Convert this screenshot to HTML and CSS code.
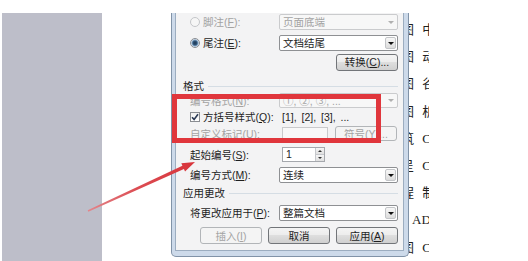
FILE: index.html
```html
<!DOCTYPE html>
<html lang="zh-CN">
<head>
    <meta charset="UTF-8">
    <title>脚注和尾注</title>
    <link rel="stylesheet" href="styles.css">
</head>
<body>
    <div class="page">
        <div class="sidebar"></div>

        <div class="dialog">
            <div class="client">
                <div class="row row-foot">
                    <div class="label off"><span class="radio"></span><span>脚注(<u>F</u>):</span></div>
                    <div class="select off"><span>页面底端</span><i class="drop"></i></div>
                </div>
                <div class="row row-end">
                    <div class="label"><span class="radio on"></span><span>尾注(<u>E</u>):</span></div>
                    <div class="select"><span>文档结尾</span><i class="drop"></i></div>
                </div>
                <div class="row row-convert">
                    <button class="btn">转换(<u>C</u>)...</button>
                </div>

                <div class="group group-format">格式</div>
                <div class="row row-numfmt">
                    <div class="label off"><span>编号格式(<u>N</u>):</span></div>
                    <div class="select off"><span>①, ②, ③, ...</span><i class="drop"></i></div>
                </div>
                <div class="row row-bracket">
                    <div class="label"><span class="check"><svg width="8" height="8" viewBox="0 0 8 8"><path d="M1 4.2 L3.1 6.4 L7 1.3" fill="none" stroke="#2b3a55" stroke-width="1.6"/></svg></span><span>方括号样式(<u>Q</u>):</span></div>
                    <div class="value">[1], [2], [3], ...</div>
                </div>
                <div class="row row-custom">
                    <div class="label off"><span>自定义标记(<u>U</u>):</span></div>
                    <div class="field off"></div>
                    <button class="btn off">符号(<u>Y</u>)...</button>
                </div>
                <div class="row row-start">
                    <div class="label"><span>起始编号(<u>S</u>):</span></div>
                    <div class="spin"><span>1</span><i class="spin-btns"><b class="up"></b><b class="down"></b></i></div>
                </div>
                <div class="row row-mode">
                    <div class="label"><span>编号方式(<u>M</u>):</span></div>
                    <div class="select"><span>连续</span><i class="drop"></i></div>
                </div>

                <div class="group group-apply">应用更改</div>
                <div class="row row-applyto">
                    <div class="label"><span>将更改应用于(<u>P</u>):</span></div>
                    <div class="select"><span>整篇文档</span><i class="drop"></i></div>
                </div>
                <div class="row row-buttons">
                    <button class="btn off">插入(<u>I</u>)</button>
                    <button class="btn">取消</button>
                    <button class="btn">应用(<u>A</u>)</button>
                </div>
            </div>
        </div>

        <div class="doc-text">
            <p>图 中</p>
            <p>图 动</p>
            <p>图 谷</p>
            <p>图 析</p>
            <p>筑 C</p>
            <p>呈 C</p>
            <p>程 制</p>
            <p class="latin">AD</p>
            <p>图 C</p>
        </div>

        <!-- 红框和箭头 -->
        <div class="mark-box"></div>
        <svg class="mark-arrow" width="528" height="261" viewBox="0 0 528 261">
            <defs>
                <linearGradient id="arrowFill" x1="88" y1="211" x2="195" y2="162" gradientUnits="userSpaceOnUse">
                    <stop offset="0" stop-color="#e3868b"/>
                    <stop offset="0.45" stop-color="#dc4d53"/>
                    <stop offset="1" stop-color="#d8333a"/>
                </linearGradient>
            </defs>
            <polygon points="87.67,210.27 182.43,165.77 181.31,163.32 195,162 185.05,171.5 183.93,169.05 88.33,211.73" fill="url(#arrowFill)"/>
        </svg>
    </div>
</body>
</html>
```

FILE: styles.css
```css
*{
    margin:0;
    padding:0;
    box-sizing:border-box;
}
body{
    width:528px;
    height:261px;
    overflow:hidden;
    background:#fff;
    font-family:"Liberation Sans","Noto Sans CJK SC",sans-serif;
}
.page{
    position:relative;
    display:flex;
    align-items:flex-start;
    height:261px;
    padding-top:13px;
}
.sidebar{
    width:100px;
    height:248px;
    margin-left:2px;
    background-color:#bdbec9;
}

/* 对话框外框 */
.dialog{
    width:238px;
    height:244px;
    margin-left:69px;
    border:1px solid #8193a8;
    border-top:none;
    border-radius:0 0 5px 5px;
    background-color:#cddaea;
    padding:0 4px 5px 3px;
    flex:none;
}
.client{
    height:100%;
    background-color:#f3f3f4;
    border:1px solid #9cadc0;
    border-top:none;
    padding:1px 5px 0 7px;
    font-size:10.5px;
    color:#1e1e1e;
}
.row{
    display:flex;
    align-items:center;
    height:16px;
    white-space:nowrap;
}
.row-end{ margin-top:5px; }
.row-convert{ margin-top:3px; justify-content:flex-end; }
.row-numfmt{ height:15px; }
.row-bracket{ margin-top:1px; }
.row-custom{ margin-top:1px; height:15px; }
.row-start{ margin-top:6px; height:15px; }
.row-mode{ margin-top:5px; }
.row-applyto{ margin-top:5px; }
.row-buttons{ margin-top:6px; height:17px; justify-content:flex-end; gap:6px; }

.label{
    width:96px;
    flex:none;
    display:flex;
    align-items:center;
    gap:3px;
    padding-left:7px;
    line-height:14px;
}
.off{ color:#a3a3a3; }

.group{
    display:flex;
    align-items:center;
    height:14px;
    line-height:14px;
}
.group::after{
    content:"";
    flex:1;
    height:1px;
    margin-left:4px;
    background-color:#d5dde4;
}
.group-format{ margin-top:9px; }
.group-apply{ margin-top:3px; }

/* 单选 复选 */
.radio{
    width:10px;
    height:10px;
    border-radius:50%;
    border:1px solid #8a8d92;
    background:radial-gradient(circle at 50% 40%,#fff,#d8dadd);
    flex:none;
}
.radio.on{
    background:radial-gradient(circle at 50% 50%,#1d3550 0,#2f5478 2px,#7ea0c2 3px,#e6ecf2 4px);
}
.off .radio{
    border-color:#c4c6c9;
    background:#f6f6f6;
}
.check{
    width:10px;
    height:10px;
    border:1px solid #8a8d92;
    background:linear-gradient(#f0f0f0,#fff);
    display:flex;
    align-items:center;
    justify-content:center;
    flex:none;
}

/* 下拉框 */
.select{
    flex:1;
    height:16px;
    display:flex;
    align-items:center;
    justify-content:space-between;
    border:1px solid #8e9093;
    border-radius:2px;
    background-color:#fff;
    padding:0 1px 0 3px;
    line-height:14px;
}
.select.off{
    border-color:#cacbcd;
    background-color:#f7f7f7;
}
.row-numfmt .select{ height:15px; }
.drop{
    width:11px;
    height:12px;
    border:1px solid #c3c5c8;
    border-radius:2px;
    background:linear-gradient(#f7f7f7,#dcdcdc);
    display:flex;
    align-items:center;
    justify-content:center;
}
.drop::after{
    content:"";
    border-left:3px solid transparent;
    border-right:3px solid transparent;
    border-top:3px solid #111;
}
.select.off .drop{
    border-color:transparent;
    background:none;
}
.select.off .drop::after{
    border-top-color:#b0b0b0;
}

.value{
    margin-left:3px;
    line-height:14px;
    word-spacing:2px;
}

/* 按钮 */
.btn{
    width:62px;
    height:17px;
    border:1px solid #727579;
    border-radius:3px;
    background:linear-gradient(#f4f4f4 0,#ececec 50%,#dedede 50%,#d0d0d0 100%);
    font:inherit;
    line-height:14px;
    color:#1e1e1e;
    flex:none;
    white-space:nowrap;
}
.btn.off{
    border-color:#b2b5b8;
    background:#f4f4f4;
    color:#a3a3a3;
}
.row-custom .btn{
    height:15px;
    margin-left:7px;
}

.field{
    width:46px;
    height:14px;
    margin-left:3px;
    border:1px solid #c9cacc;
    background-color:#f8f8f8;
}

.spin{
    width:43px;
    height:15px;
    margin-left:3px;
    border:1px solid #a5a8ad;
    background-color:#fff;
    display:flex;
    justify-content:space-between;
    padding-left:3px;
    line-height:13px;
}
.spin-btns{
    width:9px;
    display:flex;
    flex-direction:column;
    border-left:1px solid #c6c8cc;
}
.spin-btns b{
    flex:1;
    display:flex;
    align-items:center;
    justify-content:center;
    background:linear-gradient(#f6f6f6,#e0e0e0);
}
.spin-btns .up{ border-bottom:1px solid #c6c8cc; }
.spin-btns .up::after{
    content:"";
    border-left:2px solid transparent;
    border-right:2px solid transparent;
    border-bottom:2px solid #333;
}
.spin-btns .down::after{
    content:"";
    border-left:2px solid transparent;
    border-right:2px solid transparent;
    border-top:2px solid #333;
}

/* 右边文档文字 */
.doc-text{
    width:20px;
    overflow:hidden;
    padding-top:3px;
    font-family:"Liberation Serif","Noto Sans CJK SC",serif;
    font-size:13px;
    line-height:27.2px;
    color:#222;
    flex:none;
}
.doc-text p{
    margin-left:-8px;
    white-space:nowrap;
    word-spacing:5px;
}
.doc-text .latin{
    margin-left:3px;
}

/* 标注 */
.mark-box{
    position:absolute;
    left:172px;
    top:94px;
    width:209px;
    height:49px;
    border:5px solid #e0363c;
}
.mark-arrow{
    position:absolute;
    left:0;
    top:0;
}
```
